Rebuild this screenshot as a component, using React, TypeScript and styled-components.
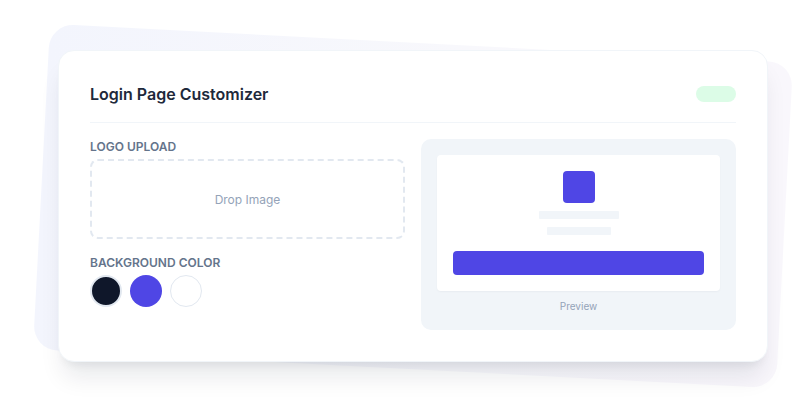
import React from "react";
import styled, { createGlobalStyle } from "styled-components";

const GlobalStyle = createGlobalStyle`
  html, body {
    margin: 0;
    padding: 0;
    background: #ffffff;
    font-family: Inter, "Noto Sans", sans-serif;
  }
  * {
    box-sizing: border-box;
  }
`;

const Page = styled.div`
  width: 810px;
  height: 411px;
  display: flex;
  align-items: flex-start;
  justify-content: center;
  padding: 50px 0 0 16px;
  overflow: hidden;
`;

// tilted backdrop behind the card
const CardWrap = styled.div`
  position: relative;
  isolation: isolate;

  &::before {
    content: "";
    position: absolute;
    inset: -7px -17px;
    border-radius: 24px;
    background: linear-gradient(90deg, #f3f5fd 0%, #f8f8fc 55%, #f9f7fc 100%);
    transform: rotate(3deg);
    z-index: -1;
  }
`;

const Card = styled.div`
  width: 710px;
  background: #ffffff;
  border: 1px solid #f1f5f9;
  border-radius: 16px;
  padding: 31px;
  box-shadow: 0 20px 25px -5px rgba(15, 23, 42, 0.09), 0 8px 10px -6px rgba(15, 23, 42, 0.08);
`;

const Header = styled.div`
  display: flex;
  align-items: center;
  justify-content: space-between;
  height: 41px;
  padding-bottom: 16px;
  border-bottom: 1px solid #f1f5f9;
  margin-bottom: 16px;
`;

const Title = styled.h2`
  margin: 0;
  font-size: 16px;
  line-height: 24px;
  font-weight: 600;
  color: #1e293b;
`;

const StatusPill = styled.div`
  width: 40px;
  height: 16px;
  border-radius: 999px;
  background: #dcfce7;
`;

const Body = styled.div`
  display: grid;
  grid-template-columns: 1fr 1fr;
  gap: 16px;
`;

const Column = styled.div`
  display: flex;
  flex-direction: column;
`;

const Label = styled.div`
  font-size: 12px;
  line-height: 16px;
  font-weight: 600;
  color: #64748b;
  text-transform: uppercase;
  margin-bottom: 4px;
`;

const DropZone = styled.div`
  height: 80px;
  border: 2px dashed #e2e8f0;
  border-radius: 8px;
  display: flex;
  align-items: center;
  justify-content: center;
  font-size: 12px;
  color: #94a3b8;
  margin-bottom: 16px;
`;

const Swatches = styled.div`
  display: flex;
  gap: 8px;
`;

const Swatch = styled.div<{ $color: string; $ring?: boolean }>`
  width: 32px;
  height: 32px;
  border-radius: 50%;
  background: ${(p) => p.$color};
  border: ${(p) => (p.$ring ? "2px solid #e2e8f0" : p.$color === "#ffffff" ? "1px solid #e2e8f0" : "none")};
`;

const PreviewPanel = styled.div`
  background: #f1f5f9;
  border-radius: 10px;
  padding: 16px;
  display: flex;
  flex-direction: column;
  align-items: stretch;
`;

const MockScreen = styled.div`
  background: #ffffff;
  border-radius: 4px;
  padding: 16px;
  display: flex;
  flex-direction: column;
  align-items: center;
  box-shadow: 0 1px 2px rgba(15, 23, 42, 0.04);
`;

const MockLogo = styled.div`
  width: 32px;
  height: 32px;
  border-radius: 4px;
  background: #4f46e5;
  margin-bottom: 8px;
`;

const MockLine = styled.div<{ $width: number }>`
  width: ${(p) => p.$width}px;
  height: 8px;
  background: #f1f5f9;
  border-radius: 1px;
  margin-bottom: 8px;
`;

const MockButton = styled.div`
  align-self: stretch;
  height: 24px;
  border-radius: 4px;
  background: #4f46e5;
  margin-top: 8px;
`;

const PreviewCaption = styled.div`
  margin-top: 8px;
  text-align: center;
  font-size: 10px;
  line-height: 15px;
  color: #94a3b8;
`;

export default function App() {
  return (
    <>
      <GlobalStyle />
      <Page>
        <CardWrap>
          <Card>
            <Header>
              <Title>Login Page Customizer</Title>
              <StatusPill />
            </Header>
            <Body>
              <Column>
                <Label>Logo Upload</Label>
                <DropZone>Drop Image</DropZone>
                <Label>Background Color</Label>
                <Swatches>
                  <Swatch $color="#0f172a" $ring />
                  <Swatch $color="#4f46e5" />
                  <Swatch $color="#ffffff" />
                </Swatches>
              </Column>
              <PreviewPanel>
                <MockScreen>
                  <MockLogo />
                  <MockLine $width={80} />
                  <MockLine $width={64} />
                  <MockButton />
                </MockScreen>
                <PreviewCaption>Preview</PreviewCaption>
              </PreviewPanel>
            </Body>
          </Card>
        </CardWrap>
      </Page>
    </>
  );
}
